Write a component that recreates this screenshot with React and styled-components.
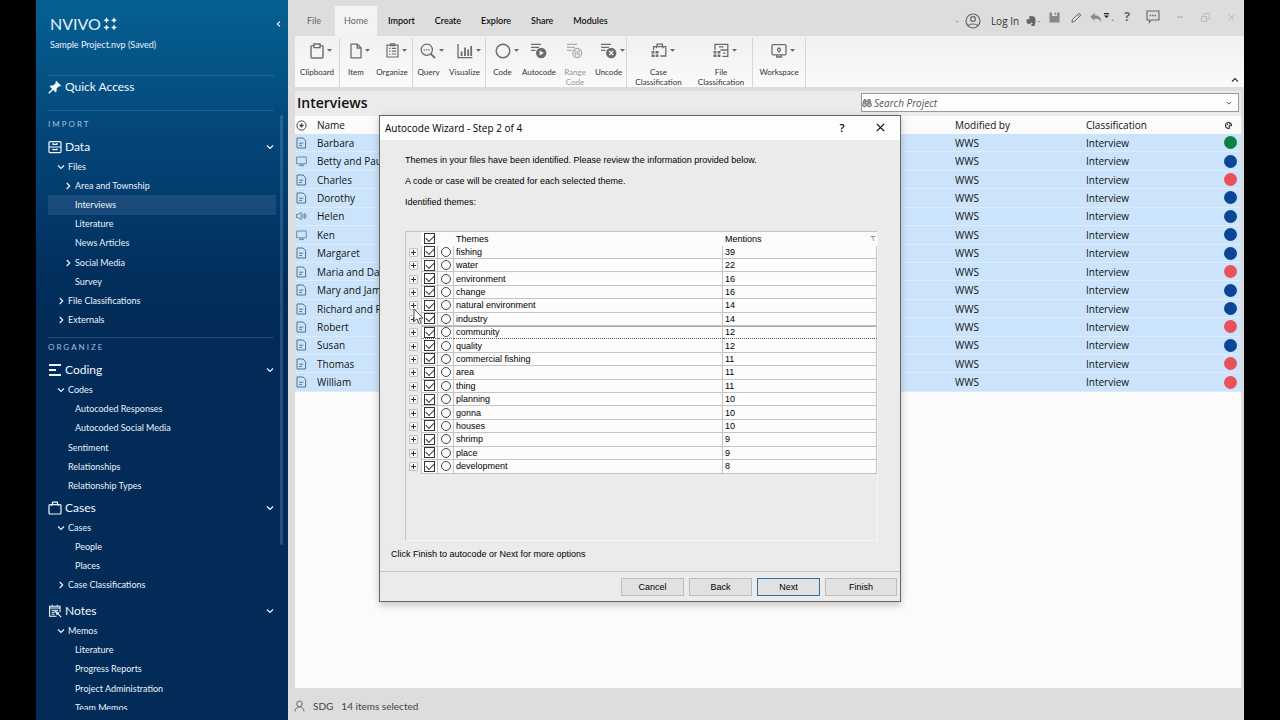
import React from "react";
import styled, { createGlobalStyle, css } from "styled-components";

const lato = `Lato, "Liberation Sans", sans-serif`;
const ui = `"Open Sans", "Noto Sans", sans-serif`;
const arial = `"Liberation Sans", Arial, sans-serif`;

const GlobalStyle = createGlobalStyle`
  * { box-sizing: border-box; }
  body { margin: 0; background: #000; font-family: ${ui}; color: #111; }
  button, input { font: inherit; color: inherit; margin: 0; }
  button { padding: 0; border: 0; background: none; }
  ul { list-style: none; margin: 0; padding: 0; }
  h1, h2, p { margin: 0; font-weight: 400; }
  a { color: inherit; text-decoration: none; }
  svg { display: block; flex: none; }
`;

/* ---------- shell ---------- */
const Shell = styled.div`
  position: relative;
  display: grid;
  grid-template-columns: 252px 1fr;
  height: 100vh;
  margin: 0 36px;
`;

/* ---------- sidebar ---------- */
const Sidebar = styled.aside`
  position: relative;
  display: flex;
  flex-direction: column;
  min-height: 0;
  padding: 14px 12px 10px;
  background: linear-gradient(#065f93 0, #045284 80px, #04467a 130px, #033c6d 200px, #022f5d 270px, #022b57 330px);
  color: #e9f2fc;
  font: 9px/14px ${lato};
  overflow: hidden;
`;
const LogoRow = styled.div`
  display: flex;
  align-items: center;
  gap: 2px;
  height: 20px;
  padding-left: 2px;
`;
const LogoText = styled.span`
  font: 400 16px/20px ${lato};
  color: #e6f1fb;
`;
const Collapse = styled.button`
  display: grid;
  place-items: center;
  margin-left: auto;
  margin-right: -8px;
  width: 10px;
  height: 14px;
`;
const ProjectName = styled.p`
  margin: 4px 0 23px 2px;
  line-height: 14px;
`;
const Rule = styled.hr`
  flex: none;
  width: 226px;
  height: 1px;
  margin: ${(p) => p.$top || 0}px 0 0;
  border: 0;
  background: rgba(140, 200, 240, 0.2);
`;
const NavHead = styled.h2`
  display: flex;
  flex: none;
  align-items: center;
  gap: 3px;
  height: ${(p) => p.$height || 20}px;
  margin-top: ${(p) => p.$top || 0}px;
  padding-right: 2px;
  font-size: 12px;
  line-height: 16px;
  color: #f2f8ff;
  > svg:last-child:not(:first-child) { margin-left: auto; }
`;
const GroupLabel = styled.p`
  flex: none;
  margin-top: ${(p) => p.$top}px;
  font-size: 8px;
  line-height: 14px;
  letter-spacing: 2px;
  color: #9fc0de;
`;
const NavScroll = styled.nav`
  display: flex;
  flex-direction: column;
  flex: 1;
  min-height: 0;
  overflow: hidden;
`;
const NavList = styled.ul`
  display: grid;
  flex: none;
  grid-auto-rows: 1fr;
  height: ${(p) => p.$height}px;
`;
const NavItem = styled.li`
  display: flex;
  align-items: center;
  gap: 3px;
  padding-left: ${(p) => (p.$level === 2 ? 16 : 9)}px;
  background: ${(p) => (p.$active ? "rgba(150, 160, 200, 0.16)" : "none")};
  a { line-height: 14px; }
`;
const ChevronSlot = styled.span`
  display: grid;
  place-items: center;
  width: 8px;
`;
const ScrollThumb = styled.div`
  position: absolute;
  right: 5px;
  top: 115px;
  width: 3px;
  height: 430px;
  border-radius: 2px;
  background: rgba(110, 165, 205, 0.3);
`;

/* ---------- main pane ---------- */
const Main = styled.main`
  display: flex;
  flex-direction: column;
  min-width: 0;
  min-height: 0;
  background: #dddddd;
`;
const TopBar = styled.header`
  display: flex;
  height: 36px;
  flex: none;
  padding-left: 10px;
`;
const Tabs = styled.nav`
  display: flex;
  align-items: flex-end;
  gap: 2px;
`;
const Tab = styled.button`
  height: 30px;
  padding: 0 9px;
  font: ${(p) => (p.$strong ? 500 : 400)} 9px/30px ${lato};
  color: ${(p) => (p.$strong ? "#000" : "#666")};
  background: ${(p) => (p.$active ? "#f3f3f3" : "none")};
  &:first-child { margin-right: 3px; }
`;
const TopTools = styled.div`
  display: flex;
  margin-left: auto;
  color: #666;
`;
const Tool = styled.button`
  display: flex;
  align-items: center;
  justify-content: center;
  gap: 2px;
  width: ${(p) => p.$width}px;
  height: ${(p) => (p.$low ? 42 : 34)}px;
  font: 10px/14px ${ui};
  color: ${(p) => p.$color || "#666"};
`;
const HelpMark = styled.span`
  font: 700 12px/16px ${ui};
`;
const LogInText = styled.span`
  margin-left: 8px;
  color: #333;
`;

const Ribbon = styled.section`
  display: flex;
  flex: none;
  height: 51px;
  margin-left: 7px;
  padding-top: 2px;
  background: linear-gradient(#f1f1f1, #fafafa);
  font: 8px/10px ${lato};
  color: #333;
`;
const RibbonGroup = styled.div`
  display: flex;
  border-right: 1px solid #d6d6d6;
`;
const RibbonButton = styled.button`
  display: flex;
  flex-direction: column;
  align-items: center;
  width: ${(p) => p.$width}px;
  opacity: ${(p) => (p.disabled ? 0.5 : 1)};
`;
const RibbonIcon = styled.span`
  display: grid;
  grid-template-columns: 1fr auto 1fr;
  align-items: center;
  gap: 3px;
  height: 25px;
  margin-bottom: 4px;
  width: 100%;
  color: #6c6c6c;
`;
const RibbonCollapse = styled.button`
  align-self: flex-end;
  margin: 0 5px 3px auto;
`;

const Content = styled.section`
  display: flex;
  flex-direction: column;
  flex: 1;
  min-height: 0;
  margin: 4px 3px 0 7px;
  background: #fbfbfb;
`;
const ContentHead = styled.div`
  display: flex;
  align-items: center;
  justify-content: space-between;
  flex: none;
  height: 25px;
  padding: 0 2px 2px;
  background: #ebebeb;
`;
const Heading = styled.h1`
  font: 600 14px/20px ${ui};
`;
const SearchBox = styled.label`
  display: flex;
  align-items: center;
  gap: 2px;
  width: 378px;
  height: 19px;
  padding: 0 6px 0 0;
  border: 1px solid #999;
  background: #fdfdfd;
  color: #777;
  input {
    flex: 1;
    min-width: 0;
    padding: 0;
    border: 0;
    outline: 0;
    background: none;
    font: italic 10px/14px ${ui};
  }
  input::placeholder { color: #555; opacity: 1; }
`;
const FileTable = styled.table`
  width: 100%;
  height: 276px;
  flex: none;
  table-layout: fixed;
  border-collapse: separate;
  border-spacing: 0;
  font: 10px/14px ${ui};
  th, td { padding: 0; text-align: left; font-weight: 400; white-space: nowrap; }
  td { background: #cce4fb; border-bottom: 1px solid #dcecfc; }
  th { height: 18px; }
  th:first-child, td:first-child { padding-left: 1px; }
`;
const Col = styled.col`
  width: ${(p) => (p.$width ? p.$width + "px" : "auto")};
`;
const Dot = styled.span`
  display: block;
  width: 13px;
  height: 13px;
  border-radius: 50%;
  background: ${(p) => p.$color};
`;
const StatusBar = styled.footer`
  display: flex;
  align-items: center;
  flex: none;
  gap: 8px;
  height: 32px;
  padding: 4px 6px 0;
  font: 10px/14px ${lato};
  color: #444;
`;

/* ---------- dialog ---------- */
const Overlay = styled.div`
  position: absolute;
  inset: 0;
  display: grid;
  place-items: center;
  padding-bottom: 4px;
`;
const Dialog = styled.section`
  position: relative;
  width: 522px;
  border: 1px solid #666;
  background: #ebebeb;
  box-shadow: 0 3px 8px rgba(0, 0, 0, 0.22);
  font: 9px/12px ${arial};
  color: #000;
`;
const DialogTitle = styled.header`
  display: flex;
  align-items: center;
  height: 24px;
  padding: 0 14px 0 5px;
  background: #fdfdfd;
  font: 10px/14px ${ui};
  h2 { flex: 1; font-size: 10px; }
`;
const TitleButton = styled.button`
  display: grid;
  place-items: center;
  width: ${(p) => p.$width}px;
  font: 600 11px/14px ${ui};
`;
const DialogBody = styled.div`
  padding: 14px 22px 0 25px;
`;
const Line = styled.p`
  margin-bottom: 9px;
`;
const TreePanel = styled.div`
  height: 310px;
  margin-top: 23px;
  border: 1px solid;
  border-color: #c4c4c4 #f6f6f6 #f6f6f6 #c4c4c4;
`;
const focusedRow = css`
  td:not(:first-child) {
    border-bottom: 1px dotted #555;
    box-shadow: inset 0 1px 0 #aaa;
  }
`;
const ThemeTable = styled.table`
  width: 100%;
  height: 242px;
  table-layout: fixed;
  border-collapse: separate;
  border-spacing: 0;
  th, td { padding: 0; text-align: left; font-weight: 400; line-height: 12px; }
  thead th { height: 14px; }
  th:not(:first-child) { background: #fbfbfb; }
  td:not(:first-child) {
    background: #fcfcfc;
    border-bottom: 1px solid #c4c4c4;
    border-right: 1px solid #c4c4c4;
  }
  td:nth-child(2) { border-left: 1px solid #c4c4c4; }
  td:nth-child(4), td:nth-child(5) { padding-left: 2px; }
  th:nth-child(4), th:nth-child(5) { padding-left: 2px; }
`;
const ThemeRow = styled.tr`
  ${(p) => p.$focused && focusedRow}
`;
const Tick = styled.input`
  appearance: none;
  position: relative;
  display: block;
  width: 11px;
  height: 11px;
  margin: 0 auto;
  border: 1px solid #333;
  background: #fff;
  &:checked::after {
    content: "";
    position: absolute;
    left: 1px;
    top: 1px;
    width: 7px;
    height: 4px;
    border: solid #333;
    border-width: 0 0 1px 1px;
    transform: rotate(-45deg);
  }
`;
const Ring = styled.span`
  display: block;
  width: 10px;
  height: 10px;
  margin: 0 auto;
  border: 1px solid #444;
  border-radius: 50%;
`;
const Expand = styled.button`
  display: grid;
  place-items: center;
  width: 9px;
  height: 9px;
  margin: 0 auto;
  border: 1px solid #c2c2c2;
  border-radius: 1px;
  background: #f4f4f4;
`;
const SortHead = styled.span`
  display: flex;
  align-items: center;
  justify-content: space-between;
  padding-right: 1px;
`;
const Hint = styled.p`
  padding: 7px 11px 11px;
`;
const DialogFooter = styled.footer`
  display: flex;
  justify-content: flex-end;
  gap: 5px;
  padding: 6px 3px 5px;
  border-top: 1px solid #c8c8c8;
`;
const DialogButton = styled.button`
  width: ${(p) => (p.$wide ? 72 : 63)}px;
  height: 18px;
  border: 1px solid ${(p) => (p.$primary ? "#2f6ea3" : "#bdbdbd")};
  background: #e1e1e1;
  font: 9px/12px ${arial};
`;
const Pointer = styled.svg`
  position: absolute;
  left: 33px;
  top: 192px;
`;

/* ---------- icons ---------- */
const Chevron = ({ dir = "down", size = 8, color = "currentColor" }) => {
  const d = { down: "M1 2.5 4 5.5 7 2.5", right: "M2.7 1 5.7 4 2.7 7", left: "M5 1.4 2.4 4 5 6.6", up: "M1 5.5 4 2.5 7 5.5" }[dir];
  return (
    <svg width={size} height={size} viewBox="0 0 8 8" fill="none" stroke={color} strokeWidth="1.2" aria-hidden="true">
      <path d={d} />
    </svg>
  );
};
const star = (x, y) => `M${x} ${y - 3}L${x + 1} ${y - 1}L${x + 3} ${y}L${x + 1} ${y + 1}L${x} ${y + 3}L${x - 1} ${y + 1}L${x - 3} ${y}L${x - 1} ${y - 1}Z`;
const LogoMark = () => (
  <svg width="15" height="14" viewBox="0 0 15 14" fill="#f2f8ff" aria-hidden="true">
    <path d={star(3.5, 3.2) + star(11, 3.2) + star(3.5, 10.6) + star(11, 10.6)} />
  </svg>
);
const Svg = ({ size = 14, w, h, children, ...rest }) => (
  <svg width={w || size} height={h || size} viewBox={`0 0 ${w || size} ${h || size}`} fill="none" stroke="currentColor" aria-hidden="true" {...rest}>
    {children}
  </svg>
);
const PinIcon = () => (
  <Svg size={14}>
    <path d="M8.2.8 13.2 5.8 12 6.6 11 6.3 8.7 8.6 8.5 11.6 7.6 12.4 1.7 6.4 2.6 5.5 5.6 5.3 7.8 3 7.4 1.9Z" fill="currentColor" stroke="none" />
    <path d="M5 9 .8 13.2" strokeWidth="1.5" />
  </Svg>
);
const DataIcon = () => (
  <Svg size={14} strokeWidth="1.2">
    <rect x="1" y="1.6" width="12" height="11" rx="1" />
    <path d="M1 7H13M4.5 4.3H9.5M4.5 9.7H9.5M5 3V4.3M9 3V4.3M5 8.5V9.7M9 8.5V9.7" />
  </Svg>
);
const CodingIcon = () => (
  <Svg size={14} strokeWidth="2">
    <path d="M1 2H13M1 7H8M1 12H13" />
  </Svg>
);
const CasesIcon = () => (
  <Svg size={14} strokeWidth="1.2">
    <rect x="1" y="3.6" width="12" height="9.4" rx="1" />
    <path d="M4.5 3.5V1.2H9.5V3.5M3.6 3.6V5M10.4 3.6V5" />
  </Svg>
);
const NotesIcon = () => (
  <Svg size={14} strokeWidth="1.1">
    <path d="M12 8V2.2H1.6V12.2H8.6M1.6 4H12M4.2 .8V2.2M9.4 .8V2.2M3.6 6.2H10M3.6 8.2H7M3.6 10.2H6.4" />
    <path d="M7.6 7.4 10.6 8.6 9 10.2ZM9.8 9.6 13.2 13.2" />
  </Svg>
);
const Caret = () => (
  <svg width="5" height="3" viewBox="0 0 5 3" fill="#666" aria-hidden="true"><path d="M0 0H5L2.5 2.8Z" /></svg>
);

const ribbonIcons = {
  clipboard: (
    <Svg w={14} h={16} strokeWidth="1.4">
      <rect x="1" y="2.6" width="12" height="12.4" rx="1" />
      <path d="M4 1H10V4.6H4Z" fill="#f4f4f4" />
    </Svg>
  ),
  item: (
    <Svg w={12} h={16} strokeWidth="1.3">
      <path d="M1 1.2H7.4L11 4.8V14.8H1Z" />
      <path d="M7.2 1.2V5H11" />
    </Svg>
  ),
  organize: (
    <Svg w={13} h={15} strokeWidth="1.2">
      <path d="M1 2.2H12V14H1Z" />
      <path d="M4.5.8H8.5V2.6H4.5ZM3 5.4H4.4M5.8 5.4H10.2M3 8.2H4.4M5.8 8.2H10.2M3 11H4.4M5.8 11H10.2" />
    </Svg>
  ),
  query: (
    <Svg size={16} strokeWidth="1.3">
      <circle cx="6.8" cy="6.8" r="5.6" />
      <path d="M10.8 10.8 15 15" strokeWidth="1.9" />
      <path d="M3.6 6.8H10" strokeDasharray="1.4 .9" />
    </Svg>
  ),
  visualize: (
    <Svg size={16} strokeWidth="1.3">
      <path d="M1 1V14.6H15.4" />
      <path d="M4.6 8.5V13M8 4.6V13M11.2 6.6V13M14.2 3V13" strokeWidth="1.8" />
    </Svg>
  ),
  code: (
    <Svg size={16} strokeWidth="1.5"><circle cx="8" cy="8" r="6.8" /></Svg>
  ),
  autocode: (
    <Svg size={16} strokeWidth="1.3">
      <path d="M0 1.4H10M0 4.4H8M0 7.4H4.5" />
      <circle cx="10.2" cy="10" r="5.2" fill="currentColor" stroke="none" />
      <path d="M8.6 7.6 12.8 10 8.6 12.4Z" fill="#f4f4f4" stroke="none" />
    </Svg>
  ),
  range: (
    <Svg size={16} strokeWidth="1.3">
      <path d="M0 1.4H10M0 4.4H8M0 7.4H4.5" />
      <circle cx="10.2" cy="10" r="4.5" />
      <path d="M8.2 7V13M12 7V13M10.2 8V12" strokeWidth="1.2" />
    </Svg>
  ),
  uncode: (
    <Svg size={16} strokeWidth="1.3">
      <path d="M0 1.4H10M0 4.4H8M0 7.4H4.5" />
      <circle cx="10.2" cy="10" r="5.2" fill="currentColor" stroke="none" />
      <path d="M8.2 8 12.2 12M12.2 8 8.2 12" stroke="#f4f4f4" />
    </Svg>
  ),
  cases: (
    <Svg size={16} strokeWidth="1.3">
      <path d="M2.6 7V3.6H14.8V13H9.4M6 3.4V1.2H11.4V3.4M5.4 3.6V5.2M12 3.6V5.2" />
      <path d="M.6 9.2H7.6M.6 12.8H7.6" strokeWidth="2.6" strokeDasharray="2.8 1.2" />
    </Svg>
  ),
  files: (
    <Svg size={16} strokeWidth="1.3">
      <path d="M2 7V1.4H14.8V13.4H9.4M7.4 7H14.8M6 3.8H10.6M10 10.2H12.4" />
      <path d="M.6 9.2H7.6M.6 12.8H7.6" strokeWidth="2.6" strokeDasharray="2.8 1.2" />
    </Svg>
  ),
  workspace: (
    <Svg size={16} strokeWidth="1.3">
      <rect x="1" y="1.6" width="14" height="10.2" rx="1" />
      <circle cx="8" cy="6.8" r="1.5" />
      <path d="M8 4.2V5M8 8.6V9.4M5 14H11M5.8 11.8V14M10.2 11.8V14" />
    </Svg>
  ),
};

const DocIcon = () => (
  <Svg w={11} h={12} color="#53708f">
    <path d="M1 1H7L9.6 3.6V11H1ZM3.2 6.2H7.2M3.2 8.4H6" />
  </Svg>
);
const ScreenIcon = () => (
  <Svg w={11} h={12} color="#6b87a4">
    <path d="M.7 2H10.3V8.8H.7ZM3 10.6H8M4.4 9V10.4M6.6 9V10.4" />
  </Svg>
);
const SoundIcon = () => (
  <Svg w={11} h={12} color="#6b87a4">
    <path d="M.6 4.4H2.4L5 2.2V9.8L2.4 7.6H.6ZM6.8 3.8V8.2M8.4 2.8V9.2M10 4V8" />
  </Svg>
);
const fileIcons = { doc: DocIcon, screen: ScreenIcon, sound: SoundIcon };

const AddIcon = () => (
  <Svg size={11} color="#444"><circle cx="5.5" cy="5.5" r="4.6" /><path d="M3.4 5.5H7.6M5.5 3.4V7.6" strokeWidth="1.6" /></Svg>
);
const PaletteIcon = () => (
  <Svg size={9} color="#333"><path d="M4.5 7.5A3 3 0 1 1 7.5 4.5L5.2 5V7.4ZM3 3.4H4M5 3H6" strokeWidth="1.2" /></Svg>
);
const Binoculars = () => (
  <Svg size={10} strokeWidth="1">
    <circle cx="2.6" cy="6.8" r="2" fill="#bbb" /><circle cx="7.4" cy="6.8" r="2" fill="#bbb" />
    <path d="M1 5.4 2 1.6H4V6M9 5.4 8 1.6H6V6M4 3.4H6" fill="#999" />
  </Svg>
);
const AccountIcon = () => (
  <Svg size={16} strokeWidth="1.2"><circle cx="8" cy="8" r="7" /><circle cx="8" cy="6" r="2.4" /><path d="M3.2 12.8C4.4 10.4 11.6 10.4 12.8 12.8" /></Svg>
);
const ElephantIcon = () => (
  <Svg size={10} stroke="none"><path d="M3.4 0H6.4L9.2 1.4 9.6 5.6 8.8 9.4 7.2 10H5.4V7.8H6.6V7L5 6.6 4 8H2L.6 6.4V3.2H3.4Z" fill="currentColor" /></Svg>
);
const SaveIcon = () => (
  <Svg size={11} stroke="none"><path d="M.5.5H10.5V10.5H.5ZM3 .5V4H8V.5H6.8V3H5.6V.5Z" fill="#888" fillRule="evenodd" /></Svg>
);
const PencilIcon = () => (
  <Svg size={11}><path d="M.9 10.1 1.6 7.4 7.8 1.2 9.8 3.2 3.6 9.4ZM6.6 2.4 8.6 4.4" /></Svg>
);
const UndoIcon = () => (
  <Svg w={12} h={11} stroke="none"><path d="M4.6.8V3.2C9 3.2 11.4 6 11.4 10.4 9.8 7.6 8 6.6 4.6 6.6V9L.4 4.8Z" fill="#888" /></Svg>
);
const OverflowIcon = () => (
  <Svg w={5} h={11} stroke="none"><path d="M0 1H5V2.2H0ZM0 3.4H5L2.5 6Z" fill="#222" /></Svg>
);
const ChatIcon = () => (
  <Svg size={14} strokeWidth="1.1"><path d="M1 1H13V10H5.4L3.4 12.4V10H1Z" /><path d="M3.8 5.5H10.4" strokeDasharray="1.4 1" strokeWidth="1.4" /></Svg>
);
const PersonIcon = () => (
  <Svg w={11} h={12} color="#666"><circle cx="5.5" cy="3.8" r="2.8" /><path d="M1 11.4C1.2 8.6 3 6.8 5.5 6.8S9.8 8.6 10 11.4" /></Svg>
);
const CloseIcon = ({ size = 9 }) => (
  <Svg size={9} width={size} height={size}><path d="M.8.8 8.2 8.2M8.2.8.8 8.2" strokeWidth="1.1" /></Svg>
);

/* ---------- data ---------- */
const sections = [
  {
    group: "IMPORT", title: "Data", Icon: DataIcon, height: 173, gap: 6,
    items: [
      ["Files", 1, "down"], ["Area and Township", 2, "right"], ["Interviews", 2, null, true], ["Literature", 2],
      ["News Articles", 2], ["Social Media", 2, "right"], ["Survey", 2], ["File Classifications", 1, "right"], ["Externals", 1, "right"],
    ],
  },
  {
    group: "ORGANIZE", title: "Coding", Icon: CodingIcon, height: 116, gap: 6, rule: true,
    items: [["Codes", 1, "down"], ["Autocoded Responses", 2], ["Autocoded Social Media", 2], ["Sentiment", 1], ["Relationships", 1], ["Relationship Types", 1]],
  },
  {
    title: "Cases", Icon: CasesIcon, height: 77, gap: 2,
    items: [["Cases", 1, "down"], ["People", 2], ["Places", 2], ["Case Classifications", 1, "right"]],
  },
  {
    title: "Notes", Icon: NotesIcon, height: 97, gap: 6,
    items: [["Memos", 1, "down"], ["Literature", 2], ["Progress Reports", 2], ["Project Administration", 2], ["Team Memos", 2]],
  },
];

const ribbonGroups = [
  [["Clipboard", "clipboard", 44, true]],
  [["Item", "item", 32, true], ["Organize", "organize", 40, true]],
  [["Query", "query", 31, true], ["Visualize", "visualize", 41, true]],
  [["Code", "code", 33, true], ["Autocode", "autocode", 40], ["Range\nCode", "range", 32], ["Uncode", "uncode", 35, true]],
  [["Case\nClassification", "cases", 63, true], ["File\nClassification", "files", 62, true]],
  [["Workspace", "workspace", 52, true]],
];

const GREEN = "#0b8043", BLUE = "#0b4595", RED = "#e9525b";
const files = [
  ["Barbara", "doc", GREEN], ["Betty and Paul", "screen", BLUE], ["Charles", "doc", RED], ["Dorothy", "doc", BLUE],
  ["Helen", "sound", BLUE], ["Ken", "screen", BLUE], ["Margaret", "doc", BLUE], ["Maria and Daniel", "doc", RED],
  ["Mary and James", "doc", BLUE], ["Richard and Patricia", "doc", BLUE], ["Robert", "doc", RED], ["Susan", "doc", BLUE],
  ["Thomas", "doc", RED], ["William", "doc", RED],
];
const themes = [
  ["fishing", 39], ["water", 22], ["environment", 16], ["change", 16], ["natural environment", 14], ["industry", 14],
  ["community", 12], ["quality", 12], ["commercial fishing", 11], ["area", 11], ["thing", 11], ["planning", 10],
  ["gonna", 10], ["houses", 10], ["shrimp", 9], ["place", 9], ["development", 8],
];

function SideNav() {
  return (
    <Sidebar>
      <LogoRow>
        <LogoText>NVIVO</LogoText>
        <LogoMark />
        <Collapse aria-label="Collapse navigation"><Chevron dir="left" /></Collapse>
      </LogoRow>
      <ProjectName>Sample Project.nvp (Saved)</ProjectName>
      <Rule />
      <NavHead $height={22}><PinIcon />Quick Access</NavHead>
      <Rule $top={12} />
      <NavScroll>
        {sections.map(({ group, title, Icon, height, gap, rule, items }) => (
          <React.Fragment key={title}>
            {rule && <Rule $top={7} />}
            {group && <GroupLabel $top={rule ? 2 : 6}>{group}</GroupLabel>}
            <NavHead $top={gap}><Icon />{title}<Chevron /></NavHead>
            <NavList $height={height}>
              {items.map(([name, level, chevron, active]) => (
                <NavItem key={name} $level={level} $active={active}>
                  <ChevronSlot>{chevron && <Chevron dir={chevron} />}</ChevronSlot>
                  <a href="#">{name}</a>
                </NavItem>
              ))}
            </NavList>
          </React.Fragment>
        ))}
      </NavScroll>
      <ScrollThumb />
    </Sidebar>
  );
}

function TitleBar() {
  return (
    <TopBar>
      <Tabs>
        {["File", "Home", "Import", "Create", "Explore", "Share", "Modules"].map((t, i) => (
          <Tab key={t} $active={t === "Home"} $strong={i > 1}>{t}</Tab>
        ))}
      </Tabs>
      <TopTools>
        <Tool as="span" $width={10} $low>·</Tool>
        <Tool $width={60} $low><AccountIcon /><LogInText>Log In</LogInText></Tool>
        <Tool $width={22} $low aria-label="Evernote"><ElephantIcon />·</Tool>
        <Tool $width={20} aria-label="Save"><SaveIcon /></Tool>
        <Tool $width={24} aria-label="Edit"><PencilIcon /></Tool>
        <Tool $width={28} aria-label="Undo"><UndoIcon /><OverflowIcon />.</Tool>
        <Tool $width={22} aria-label="Help"><HelpMark>?</HelpMark></Tool>
        <Tool $width={30} aria-label="Feedback"><ChatIcon /></Tool>
        <Tool $width={24} $color="#aaa" aria-label="Minimize"><Svg w={6} h={2}><path d="M0 1H6" /></Svg></Tool>
        <Tool $width={26} $color="#bbb" aria-label="Restore">
          <Svg size={9}><path d="M.5 3.5H5.5V8.5H.5ZM3 3.5V.5H8.5V6H5.5" /></Svg>
        </Tool>
        <Tool $width={26} $color="#aaa" aria-label="Close"><CloseIcon size={7} /></Tool>
      </TopTools>
    </TopBar>
  );
}

function RibbonBar() {
  return (
    <Ribbon>
      {ribbonGroups.map((group, i) => (
        <RibbonGroup key={i}>
          {group.map(([label, icon, width, menu]) => (
            <RibbonButton key={label} $width={width} disabled={icon === "range"}>
              <RibbonIcon><span />{ribbonIcons[icon]}{menu ? <Caret /> : <span />}</RibbonIcon>
              {label.split("\n").map((l) => <span key={l}>{l}</span>)}
            </RibbonButton>
          ))}
        </RibbonGroup>
      ))}
      <RibbonCollapse aria-label="Collapse ribbon"><Chevron dir="up" color="#333" /></RibbonCollapse>
    </Ribbon>
  );
}

function FileList() {
  return (
    <Content>
      <ContentHead>
        <Heading>Interviews</Heading>
        <SearchBox>
          <Binoculars />
          <input type="text" placeholder="Search Project" aria-label="Search Project" />
          <Chevron size={6} color="#444" />
        </SearchBox>
      </ContentHead>
      <FileTable>
        <colgroup><Col $width={22} /><Col /><Col $width={131} /><Col $width={138} /><Col $width={17} /></colgroup>
        <thead>
          <tr><th><AddIcon /></th><th>Name</th><th>Modified by</th><th>Classification</th><th><PaletteIcon /></th></tr>
        </thead>
        <tbody>
          {files.map(([name, kind, color]) => {
            const Icon = fileIcons[kind];
            return (
              <tr key={name}>
                <td><Icon /></td><td>{name}</td><td>WWS</td><td>Interview</td><td><Dot $color={color} /></td>
              </tr>
            );
          })}
        </tbody>
      </FileTable>
    </Content>
  );
}

function AutocodeDialog() {
  return (
    <Overlay>
      <Dialog role="dialog" aria-labelledby="wizard-title">
        <DialogTitle>
          <h2 id="wizard-title">Autocode Wizard - Step 2 of 4</h2>
          <TitleButton $width={64} aria-label="Help">?</TitleButton>
          <TitleButton $width={12} aria-label="Close"><CloseIcon /></TitleButton>
        </DialogTitle>
        <DialogBody>
          <Line>Themes in your files have been identified. Please review the information provided below.</Line>
          <Line>A code or case will be created for each selected theme.</Line>
          <Line>Identified themes:</Line>
          <TreePanel>
            <ThemeTable>
              <colgroup><Col $width={15} /><Col $width={17} /><Col $width={16} /><Col /><Col $width={154} /></colgroup>
              <thead>
                <tr>
                  <th />
                  <th><Tick type="checkbox" defaultChecked aria-label="Select all themes" /></th>
                  <th />
                  <th>Themes</th>
                  <th><SortHead>Mentions<Svg w={6} h={6} color="#999"><path d="M.5.5H5.5M2.5 1 4 5" /></Svg></SortHead></th>
                </tr>
              </thead>
              <tbody>
                {themes.map(([name, count]) => (
                  <ThemeRow key={name} $focused={name === "community"}>
                    <td><Expand aria-label={`Expand ${name}`}><Svg size={5} color="#333"><path d="M0 2.5H5M2.5 0V5" /></Svg></Expand></td>
                    <td><Tick type="checkbox" defaultChecked aria-label={name} /></td>
                    <td><Ring /></td>
                    <td>{name}</td>
                    <td>{count}</td>
                  </ThemeRow>
                ))}
              </tbody>
            </ThemeTable>
          </TreePanel>
        </DialogBody>
        <Hint>Click Finish to autocode or Next for more options</Hint>
        <DialogFooter>
          <DialogButton>Cancel</DialogButton>
          <DialogButton>Back</DialogButton>
          <DialogButton $primary>Next</DialogButton>
          <DialogButton $wide>Finish</DialogButton>
        </DialogFooter>
        <Pointer width="11" height="17" viewBox="0 0 11 17" fill="#fff" stroke="#555" aria-hidden="true">
          <path d="M1 1V13.4L4 10.8 6 15.6 8 14.8 6 10.2H10Z" />
        </Pointer>
      </Dialog>
    </Overlay>
  );
}

export default function App() {
  return (
    <>
      <GlobalStyle />
      <Shell>
        <SideNav />
        <Main>
          <TitleBar />
          <RibbonBar />
          <FileList />
          <StatusBar><PersonIcon /><span>SDG</span><span>14 items selected</span></StatusBar>
        </Main>
        <AutocodeDialog />
      </Shell>
    </>
  );
}
